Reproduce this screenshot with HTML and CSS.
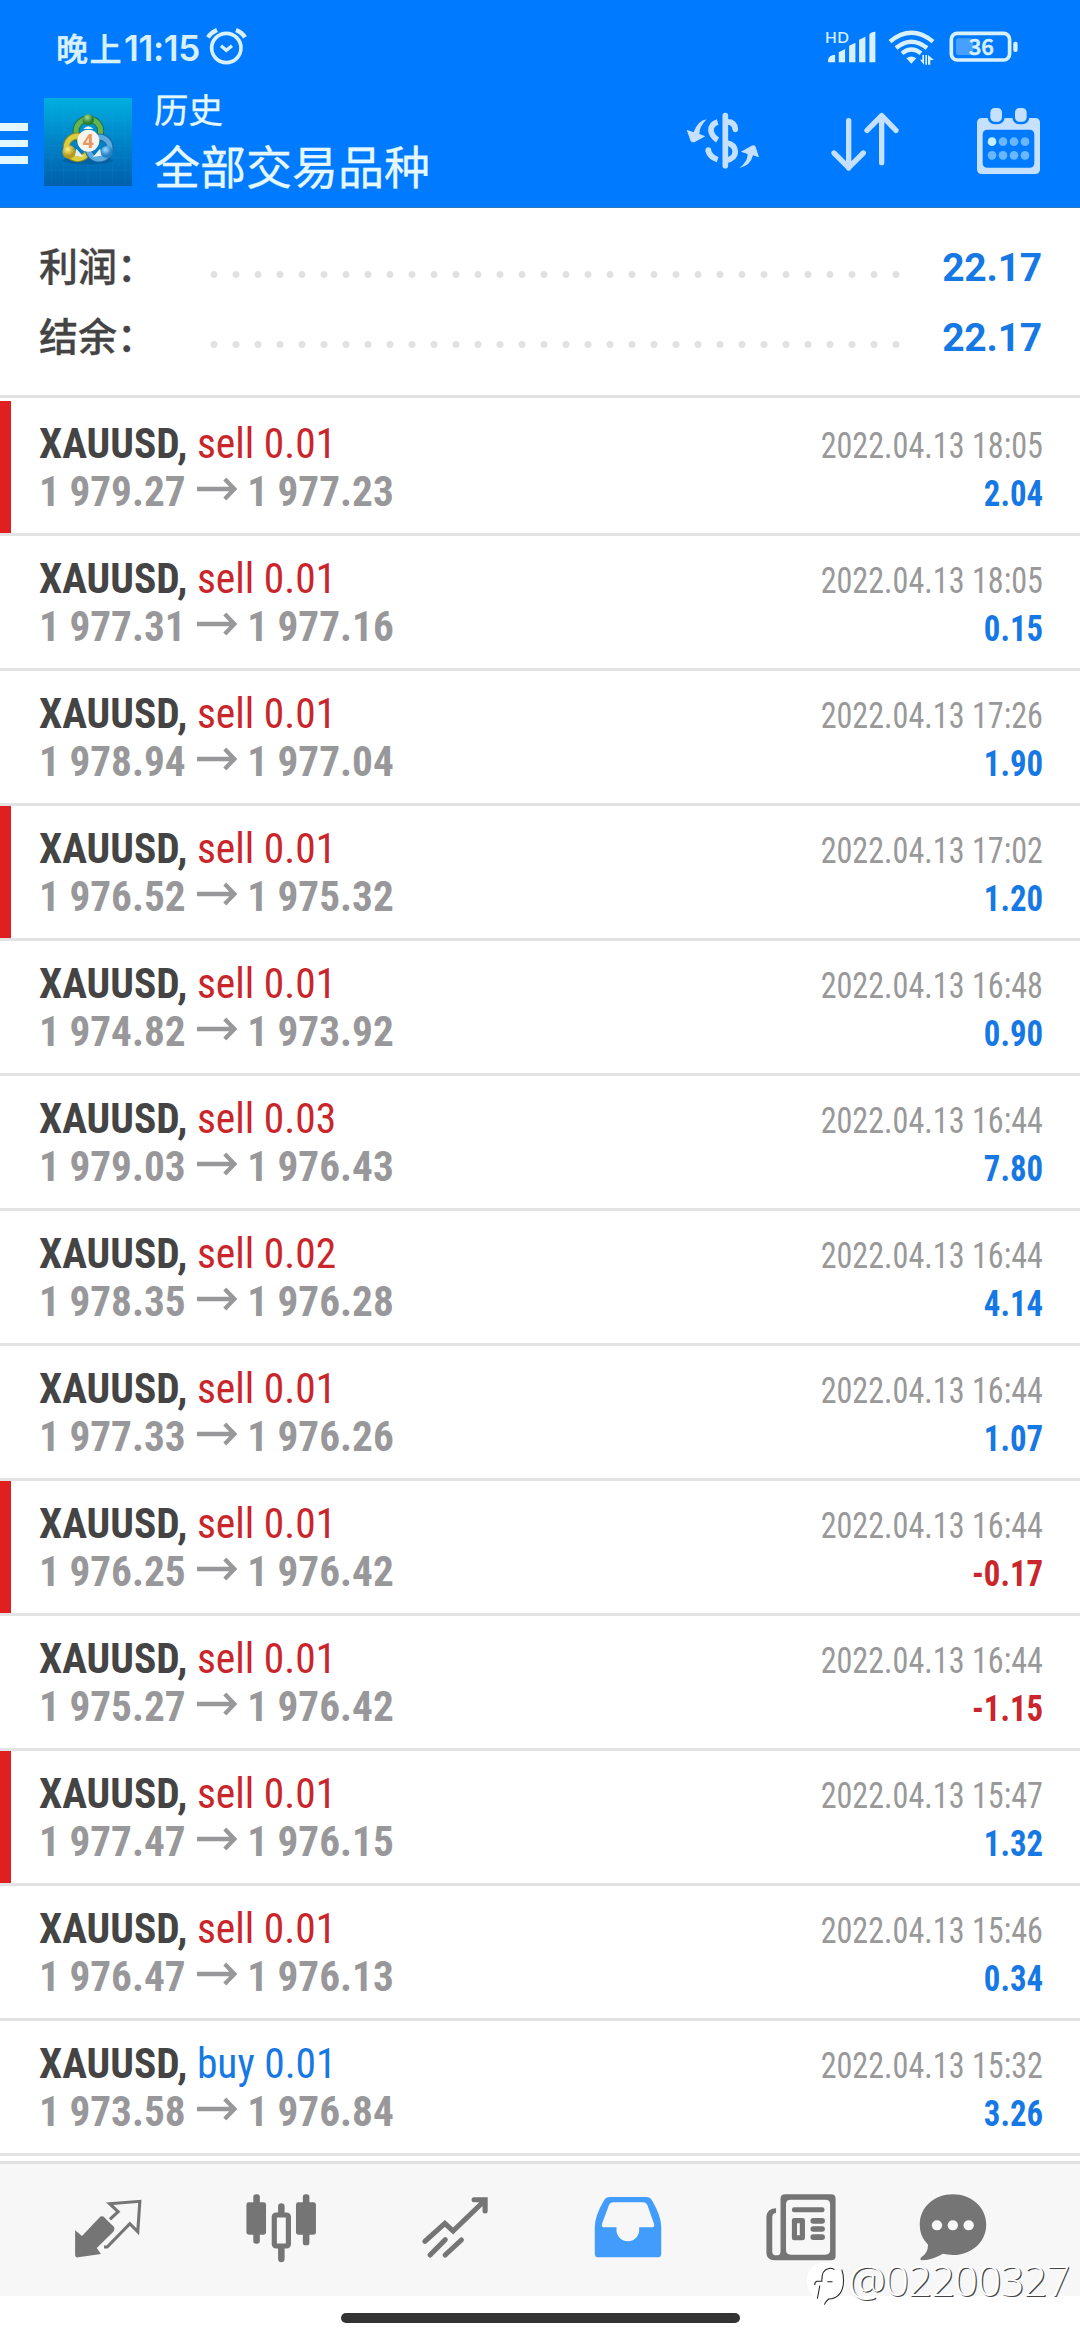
FILE: index.html
```html
<!DOCTYPE html>
<html lang="zh-CN">
<head>
<meta charset="utf-8">
<title>历史</title>
<link rel="stylesheet" href="styles.css">
</head>
<body>
<svg class="defs" aria-hidden="true">
  <symbol id="arrow" viewBox="0 0 42 24"><path d="M0 12H39M29 2L39 12L29 22" fill="none" stroke="currentColor" stroke-width="4.400"/></symbol>
</svg>

<header class="header">
  <div class="status">
    <span class="status-cn">晚上</span><span class="status-time">11:15</span>
    <svg class="alarm" viewBox="618 82 124 116" fill="none" stroke="#d9f0ff">
      <circle cx="679" cy="145" r="44" stroke-width="11"/>
      <path d="M663 138L679 152L696 138" stroke-width="10"/>
      <path d="M624 113Q634 98 651 91M708 91Q726 98 735 113" stroke-width="13"/>
    </svg>
    <svg class="system" viewBox="550 85 590 115" fill="#d9f0ff">
      <text x="553" y="129" class="hd">HD</text>
      <path d="M562 188V180Q564 167 583 165V188ZM594 188V158L613 148V188ZM625 188V138L644 129V188ZM655 188V120L674 111V188ZM686 188V105Q688 97 704 96V188Z"/>
      <g fill="none" stroke="#d9f0ff" stroke-width="13">
        <path d="M748 126Q812 73 877 126"/>
        <path d="M766 145Q812 107 859 145"/>
        <path d="M784 161Q812 138 841 161"/>
      </g>
      <path d="M797 176Q812 165 827 176L812 192ZM850 166V195L838 180H845V166ZM854 166H859V195H854ZM862 195V166L880 181H869V195Z"/>
      <rect x="932" y="101" width="175" height="80" rx="18" fill="none" stroke="#d9f0ff" stroke-width="11"/>
      <rect x="1118" y="126" width="13" height="31" rx="6"/>
      <rect x="946" y="116" width="52" height="50" rx="8" fill="#479fff"/>
      <text x="984" y="167" class="charge">36</text>
    </svg>
  </div>
  <div class="appbar">
    <div class="menu"><i></i><i></i><i></i></div>
    <svg class="logo" viewBox="42 26 264 264">
      <defs>
        <linearGradient id="sky" x1="0" y1="0" x2="0" y2="1"><stop offset="0" stop-color="#00afdf"/><stop offset=".5" stop-color="#0083c8"/><stop offset="1" stop-color="#005fab"/></linearGradient>
        <radialGradient id="gg" cx=".4" cy=".3"><stop offset="0" stop-color="#a9dc8d"/><stop offset="1" stop-color="#277f35"/></radialGradient>
        <radialGradient id="yy" cx=".4" cy=".3"><stop offset="0" stop-color="#fbf38b"/><stop offset="1" stop-color="#b69a1c"/></radialGradient>
        <radialGradient id="bb" cx=".4" cy=".3"><stop offset="0" stop-color="#9ddcff"/><stop offset="1" stop-color="#247fc4"/></radialGradient>
      </defs>
      <path fill="url(#sky)" d="M42 26H306V290H42Z"/>
      <path d="M64 26V290M100 26V290M137 26V290M174 26V290M211 26V290M248 26V290M285 26V290M42 57H306M42 94H306M42 131H306M42 168H306M42 205H306M42 242H306" stroke="#36b5e5" stroke-opacity=".14" stroke-width="2"/>
      <ellipse cx="174" cy="213" rx="76" ry="12" fill="#044c83" opacity=".45"/>
      <g fill="none">
        <g stroke="#22703a" stroke-width="21"><circle cx="175" cy="126" r="37"/></g>
        <circle cx="175" cy="126" r="37" stroke="#62b354" stroke-width="15"/>
        <circle cx="143" cy="174" r="34" stroke="#8d8420" stroke-width="21"/>
        <circle cx="143" cy="174" r="34" stroke="#dace3e" stroke-width="15"/>
        <circle cx="207" cy="176" r="33" stroke="#1f66a5" stroke-width="21"/>
        <circle cx="207" cy="176" r="33" stroke="#5cabde" stroke-width="15"/>
      </g>
      <path d="M160 119Q175 103 190 119ZM133 199L139 178L161 203ZM189 203L210 178L216 199Z" fill="#e4eff2"/>
      <circle cx="175" cy="91" r="17" fill="url(#gg)"/>
      <circle cx="117" cy="188" r="20" fill="url(#yy)"/>
      <circle cx="230" cy="188" r="18" fill="url(#bb)"/>
      <circle cx="175" cy="154" r="33" fill="#f5f4ee"/>
      <text x="158" y="175" class="four">4</text>
    </svg>
    <div class="titles"><div class="title">历史</div><div class="subtitle">全部交易品种</div></div>
    <svg class="tool currency" viewBox="136 320 220 204" fill="none" stroke="#c5e1ff">
      <path d="M254 346V496" stroke-width="17" stroke-linecap="round"/>
      <path d="M231 365Q210 371 211 391Q213 408 231 419M203 451Q207 470 231 478" stroke-width="17"/>
      <path d="M203 452V449" stroke-width="17" stroke-linecap="round"/>
      <path d="M256 365Q282 363 284 387" stroke-width="17" stroke-linecap="round"/>
      <path d="M256 427Q284 432 284 454Q283 476 256 480" stroke-width="17"/>
      <path d="M198 357Q171 361 159 396L138 388L150 423Q157 428 164 424L194 408L176 401Q176 379 198 357ZM296 503Q321 485 321 461L301 454L333 436Q341 433 345 439L355 471L337 465Q330 496 296 503Z" fill="#c5e1ff" stroke="none"/>
    </svg>
    <svg class="tool sort" viewBox="570 320 210 204" fill="none" stroke="#c5e1ff" stroke-width="16" stroke-linecap="round" stroke-linejoin="round">
      <path d="M626 361V503M582 458L626 502L670 458M725 487V346M681 390L725 346L768 390"/>
    </svg>
    <svg class="tool calendar" viewBox="1008 320 195 204">
      <path d="M1026 353H1185Q1200 353 1200 368V507Q1200 521 1185 521H1026Q1011 521 1011 507V368Q1011 353 1026 353ZM1043 388Q1028 388 1028 403V487Q1028 502 1043 502H1168Q1183 502 1183 487V403Q1183 388 1168 388Z" fill="#c5e1ff" fill-rule="evenodd"/>
      <g fill="#c5e1ff" stroke="#007bff" stroke-width="8"><rect x="1047" y="319" width="43" height="49" rx="17"/><rect x="1121" y="319" width="43" height="49" rx="17"/></g>
      <circle cx="1056" cy="424" r="13" fill="#c5efff"/>
      <g fill="#6ab6ff"><circle cx="1089" cy="424" r="13"/><circle cx="1122" cy="424" r="13"/><circle cx="1155" cy="424" r="13"/><circle cx="1056" cy="465" r="13"/><circle cx="1089" cy="465" r="13"/><circle cx="1122" cy="465" r="13"/><circle cx="1155" cy="465" r="13"/></g>
    </svg>
  </div>
</header>

<section class="summary">
  <div class="sum-row"><span class="label">利润：</span><span class="dots"></span><b class="total">22.17</b></div>
  <div class="sum-row"><span class="label">结余：</span><span class="dots"></span><b class="total">22.17</b></div>
</section>

<main class="deals">
  <article class="deal marked"><div class="line"><span class="name"><b>XAUUSD,</b> <span class="sell">sell 0.01</span></span><time>2022.04.13 18:05</time></div><div class="line"><span class="prices">1 979.27<svg><use href="#arrow"/></svg>1 977.23</span><b class="profit">2.04</b></div></article>
  <article class="deal"><div class="line"><span class="name"><b>XAUUSD,</b> <span class="sell">sell 0.01</span></span><time>2022.04.13 18:05</time></div><div class="line"><span class="prices">1 977.31<svg><use href="#arrow"/></svg>1 977.16</span><b class="profit">0.15</b></div></article>
  <article class="deal"><div class="line"><span class="name"><b>XAUUSD,</b> <span class="sell">sell 0.01</span></span><time>2022.04.13 17:26</time></div><div class="line"><span class="prices">1 978.94<svg><use href="#arrow"/></svg>1 977.04</span><b class="profit">1.90</b></div></article>
  <article class="deal marked"><div class="line"><span class="name"><b>XAUUSD,</b> <span class="sell">sell 0.01</span></span><time>2022.04.13 17:02</time></div><div class="line"><span class="prices">1 976.52<svg><use href="#arrow"/></svg>1 975.32</span><b class="profit">1.20</b></div></article>
  <article class="deal"><div class="line"><span class="name"><b>XAUUSD,</b> <span class="sell">sell 0.01</span></span><time>2022.04.13 16:48</time></div><div class="line"><span class="prices">1 974.82<svg><use href="#arrow"/></svg>1 973.92</span><b class="profit">0.90</b></div></article>
  <article class="deal"><div class="line"><span class="name"><b>XAUUSD,</b> <span class="sell">sell 0.03</span></span><time>2022.04.13 16:44</time></div><div class="line"><span class="prices">1 979.03<svg><use href="#arrow"/></svg>1 976.43</span><b class="profit">7.80</b></div></article>
  <article class="deal"><div class="line"><span class="name"><b>XAUUSD,</b> <span class="sell">sell 0.02</span></span><time>2022.04.13 16:44</time></div><div class="line"><span class="prices">1 978.35<svg><use href="#arrow"/></svg>1 976.28</span><b class="profit">4.14</b></div></article>
  <article class="deal"><div class="line"><span class="name"><b>XAUUSD,</b> <span class="sell">sell 0.01</span></span><time>2022.04.13 16:44</time></div><div class="line"><span class="prices">1 977.33<svg><use href="#arrow"/></svg>1 976.26</span><b class="profit">1.07</b></div></article>
  <article class="deal marked"><div class="line"><span class="name"><b>XAUUSD,</b> <span class="sell">sell 0.01</span></span><time>2022.04.13 16:44</time></div><div class="line"><span class="prices">1 976.25<svg><use href="#arrow"/></svg>1 976.42</span><b class="profit loss">-0.17</b></div></article>
  <article class="deal"><div class="line"><span class="name"><b>XAUUSD,</b> <span class="sell">sell 0.01</span></span><time>2022.04.13 16:44</time></div><div class="line"><span class="prices">1 975.27<svg><use href="#arrow"/></svg>1 976.42</span><b class="profit loss">-1.15</b></div></article>
  <article class="deal marked"><div class="line"><span class="name"><b>XAUUSD,</b> <span class="sell">sell 0.01</span></span><time>2022.04.13 15:47</time></div><div class="line"><span class="prices">1 977.47<svg><use href="#arrow"/></svg>1 976.15</span><b class="profit">1.32</b></div></article>
  <article class="deal"><div class="line"><span class="name"><b>XAUUSD,</b> <span class="sell">sell 0.01</span></span><time>2022.04.13 15:46</time></div><div class="line"><span class="prices">1 976.47<svg><use href="#arrow"/></svg>1 976.13</span><b class="profit">0.34</b></div></article>
  <article class="deal"><div class="line"><span class="name"><b>XAUUSD,</b> <span class="buy">buy 0.01</span></span><time>2022.04.13 15:32</time></div><div class="line"><span class="prices">1 973.58<svg><use href="#arrow"/></svg>1 976.84</span><b class="profit">3.26</b></div></article>
</main>

<nav class="tabs">
  <svg preserveAspectRatio="none" viewBox="207 185 215 215"><path d="M219 300L239 317L289 262Q297 254 305 262L332 290Q336 297 330 304L282 353L294 371L228 381Q219 382 219 373Z" fill="#757575"/><path d="M320 267L344 244L319 220L407 213L401 304L378 280L312 350H303" fill="none" stroke="#757575" stroke-width="9"/></svg>
  <svg preserveAspectRatio="none" viewBox="708 185 215 215" fill="#757575"><rect x="735" y="192" width="19" height="148" rx="8"/><rect x="715" y="216" width="57" height="97" rx="7"/><rect x="879" y="192" width="19" height="153" rx="8"/><rect x="859" y="216" width="58" height="97" rx="7"/><path d="M807 250V227Q808 219 816 219Q825 219 826 227V250ZM807 350V387Q808 396 816 396Q825 396 826 387V350Z"/><rect x="796" y="254" width="41" height="93" rx="5" fill="#f7f7f7" stroke="#757575" stroke-width="15"/></svg>
  <svg preserveAspectRatio="none" viewBox="1211 185 215 215" fill="none" stroke="#757575" stroke-width="15" stroke-linecap="round" stroke-linejoin="miter"><path d="M1231 333L1289 279L1313 302L1404 211M1374 208H1406V242M1246 374L1290 328M1290 374L1337 329"/></svg>
  <svg preserveAspectRatio="none" viewBox="147 185 215 215"><path d="M201 200H308Q318 200 324 210Q351 257 351 290V370Q351 381 340 381H169Q158 381 158 370V290Q158 257 185 210Q191 200 201 200ZM212 216Q203 216 199 225L179 280Q176 291 187 291H221V300A33 33 0 0 0 287 300V291H322Q334 291 330 280L311 225Q307 216 298 216Z" fill="#419cfc" fill-rule="evenodd"/></svg>
  <svg preserveAspectRatio="none" viewBox="650 185 215 215" fill="#757575"><path d="M712 192H845Q858 192 858 205V377Q858 390 845 390H680Q657 388 657 367V258Q660 234 685 234V248Q675 248 674 260V365Q675 375 685 375H690Q697 374 698 364V205Q698 192 712 192ZM728 208Q714 208 714 221V360Q714 373 728 373H828Q842 373 842 360V221Q842 208 828 208Z" fill-rule="evenodd"/><rect x="731" y="231" width="95" height="15" rx="7"/><path d="M738 263H762Q769 263 769 270V323Q769 330 762 330H738Q731 330 731 323V270Q731 263 738 263ZM746 279V315H754V279Z" fill-rule="evenodd"/><rect x="785" y="263" width="42" height="17" rx="8"/><rect x="785" y="288" width="42" height="16" rx="8"/><rect x="785" y="312" width="42" height="17" rx="8"/></svg>
  <svg class="chat" preserveAspectRatio="none" viewBox="1092 185 215 215"><path d="M1199 192C1253 192 1296 231 1296 283S1253 374 1199 374Q1183 373 1170 370Q1144 387 1110 390Q1101 390 1107 381Q1127 368 1127 343C1112 326 1103 309 1103 283C1103 231 1145 192 1199 192Z" fill="#757575"/><g fill="#f9f9f9"><circle cx="1153" cy="285" r="15"/><circle cx="1199" cy="285" r="15"/><circle cx="1245" cy="285" r="15"/></g></svg>
</nav>
<div class="home"><span></span></div>

<div class="watermark">
  <svg preserveAspectRatio="none" viewBox="770 390 118 140"><path d="M827 398C857 398 882 418 882 452C882 488 859 507 825 507C793 507 775 486 775 451C775 419 797 398 827 398Z" fill="#fff"/><path d="M806 506L813 467M798 465Q798 456 805 454H819Q818 420 837 416Q846 413 856 419M835 455H850M877 419Q884 440 881 465Q875 505 839 507Q830 514 826 524" fill="none" stroke="#222" stroke-width="3"/></svg><span>@02200327</span>
</div>
</body>
</html>
```
FILE: styles.css
```css
* { box-sizing: border-box; }
body {
  position: relative;
  margin: 0;
  width: 1080px;
  height: 2340px;
  overflow: hidden;
  display: flex;
  flex-direction: column;
  background: #fff;
  font-family: Roboto, "Noto Sans CJK SC", sans-serif;
}
svg { display: block; flex: none; }
.defs { position: absolute; width: 0; height: 0; }

.header {
  height: 208px;
  flex: none;
  background: #007bff;
  border-bottom: 1px solid #2a78c4;
  color: #e6f8ff;
}
.status {
  height: 93px;
  padding: 27px 0 0 56px;
  display: flex;
  align-items: flex-start;
  color: #d9f0ff;
}
.status-cn { font: 500 32px/40px "Noto Sans CJK SC", sans-serif; width: 68px; letter-spacing: 1.500px; -webkit-text-stroke: 0.500px; }
.status-time { font: 600 35px/42px Inter, sans-serif; width: 82px; letter-spacing: -0.300px; }
.alarm { width: 41.300px; height: 38.700px; }
.system { width: 196.700px; height: 38.300px; margin: 1px 59px 0 auto; }
.hd { font: 600 46px Lato, sans-serif; letter-spacing: 1px; }
.charge { font: 500 66px "Noto Sans CJK SC", sans-serif; stroke: #d9f0ff; stroke-width: 2px; }

.appbar { height: 114px; display: flex; align-items: flex-start; }
.menu { width: 28px; margin-top: 30px; display: flex; flex-direction: column; gap: 9px; }
.menu i { height: 7.500px; background: #e3f7ff; }
.logo { width: 88px; height: 88px; margin: 5px 0 0 16px; }
.four { font: bold 58px "Open Sans", sans-serif; fill: #e9955c; }
.titles { margin: -10.500px 0 0 22px; width: 290px; font-family: "Noto Sans CJK SC", sans-serif; -webkit-text-stroke: 0.300px; }
.title { font-size: 34.500px; line-height: 50px; }
.subtitle { font-size: 46px; line-height: 62px; }
.tool { height: 68px; margin-top: 13.700px; }
.currency { width: 73.300px; margin-left: 241.500px; }
.sort { width: 70px; margin-left: 71.500px; }
.calendar { width: 65px; margin-left: 76px; }

.summary {
  height: 190px;
  flex: none;
  padding: 24px 38px 0 39px;
  border-bottom: 3px solid #e3e3e3;
}
.sum-row { height: 70px; display: flex; align-items: center; }
.label { width: 171px; margin-top: -6px; font: 500 39px/70px "Noto Sans CJK SC", sans-serif; color: #444; -webkit-text-stroke: 0.300px; }
.dots {
  width: 704px;
  height: 7px;
  margin-top: 15px;
  margin-left: -7px;
  background: radial-gradient(circle at center, #e1e1e1 3px, transparent 4px) 0 0 / 22px 7px repeat-x;
}
.total { margin: 1px 0 0 auto; font-size: 39px; letter-spacing: -0.200px; color: #1678e4; line-height: 70px; }

.deals { flex: none; padding-top: 3px; }
.deal {
  height: 135px;
  padding: 17.500px 37px 0 39px;
  border-bottom: 3px solid #e3e3e3;
  font-family: "Roboto Condensed", Roboto, sans-serif;
}
.marked { box-shadow: inset 11px 0 #e02020; }
.line { height: 48px; display: flex; align-items: baseline; justify-content: space-between; line-height: 48px; }
.name { font-size: 43px; color: #444; transform: scaleX(0.964); transform-origin: left; }
.sell { color: #c9252b; }
.buy { color: #1678e4; }
time { font-size: 36px; color: #999; transform: scaleX(0.893); transform-origin: right; }
.prices { display: flex; align-items: center; font-size: 43px; font-weight: 700; color: #98989a; transform: scaleX(0.96); transform-origin: left; }
.prices svg { width: 43px; height: 24px; margin: -4px 10px 0 11px; }
.profit { font-size: 36px; color: #1678e4; transform: scaleX(0.91); transform-origin: right; }
.loss { color: #c9252b; }

.tabs {
  height: 135px;
  flex: none;
  margin-top: 5px;
  padding: 27.700px 0 0 71.300px;
  border-top: 3px solid #e1e1e1;
  background: #f7f7f7;
  display: flex;
  gap: 99.200px;
}
.tabs svg { width: 74px; height: 71.700px; }
.tabs .chat { margin-left: -21.500px; }
.home { flex: 1; display: flex; justify-content: center; padding-top: 17px; }
.home span { width: 399px; height: 10px; border-radius: 5px; background: #333; }

.watermark {
  position: absolute;
  left: 805px;
  top: 2257px;
  display: flex;
  align-items: flex-start;
  color: #fff;
  font: 300 42px/46px "Open Sans", sans-serif;
  letter-spacing: -0.900px;
  text-shadow: 1.200px 0.800px 0 #444;
}
.watermark svg { width: 40.600px; height: 46.700px; margin: 3px 3px 0 0; }
```
